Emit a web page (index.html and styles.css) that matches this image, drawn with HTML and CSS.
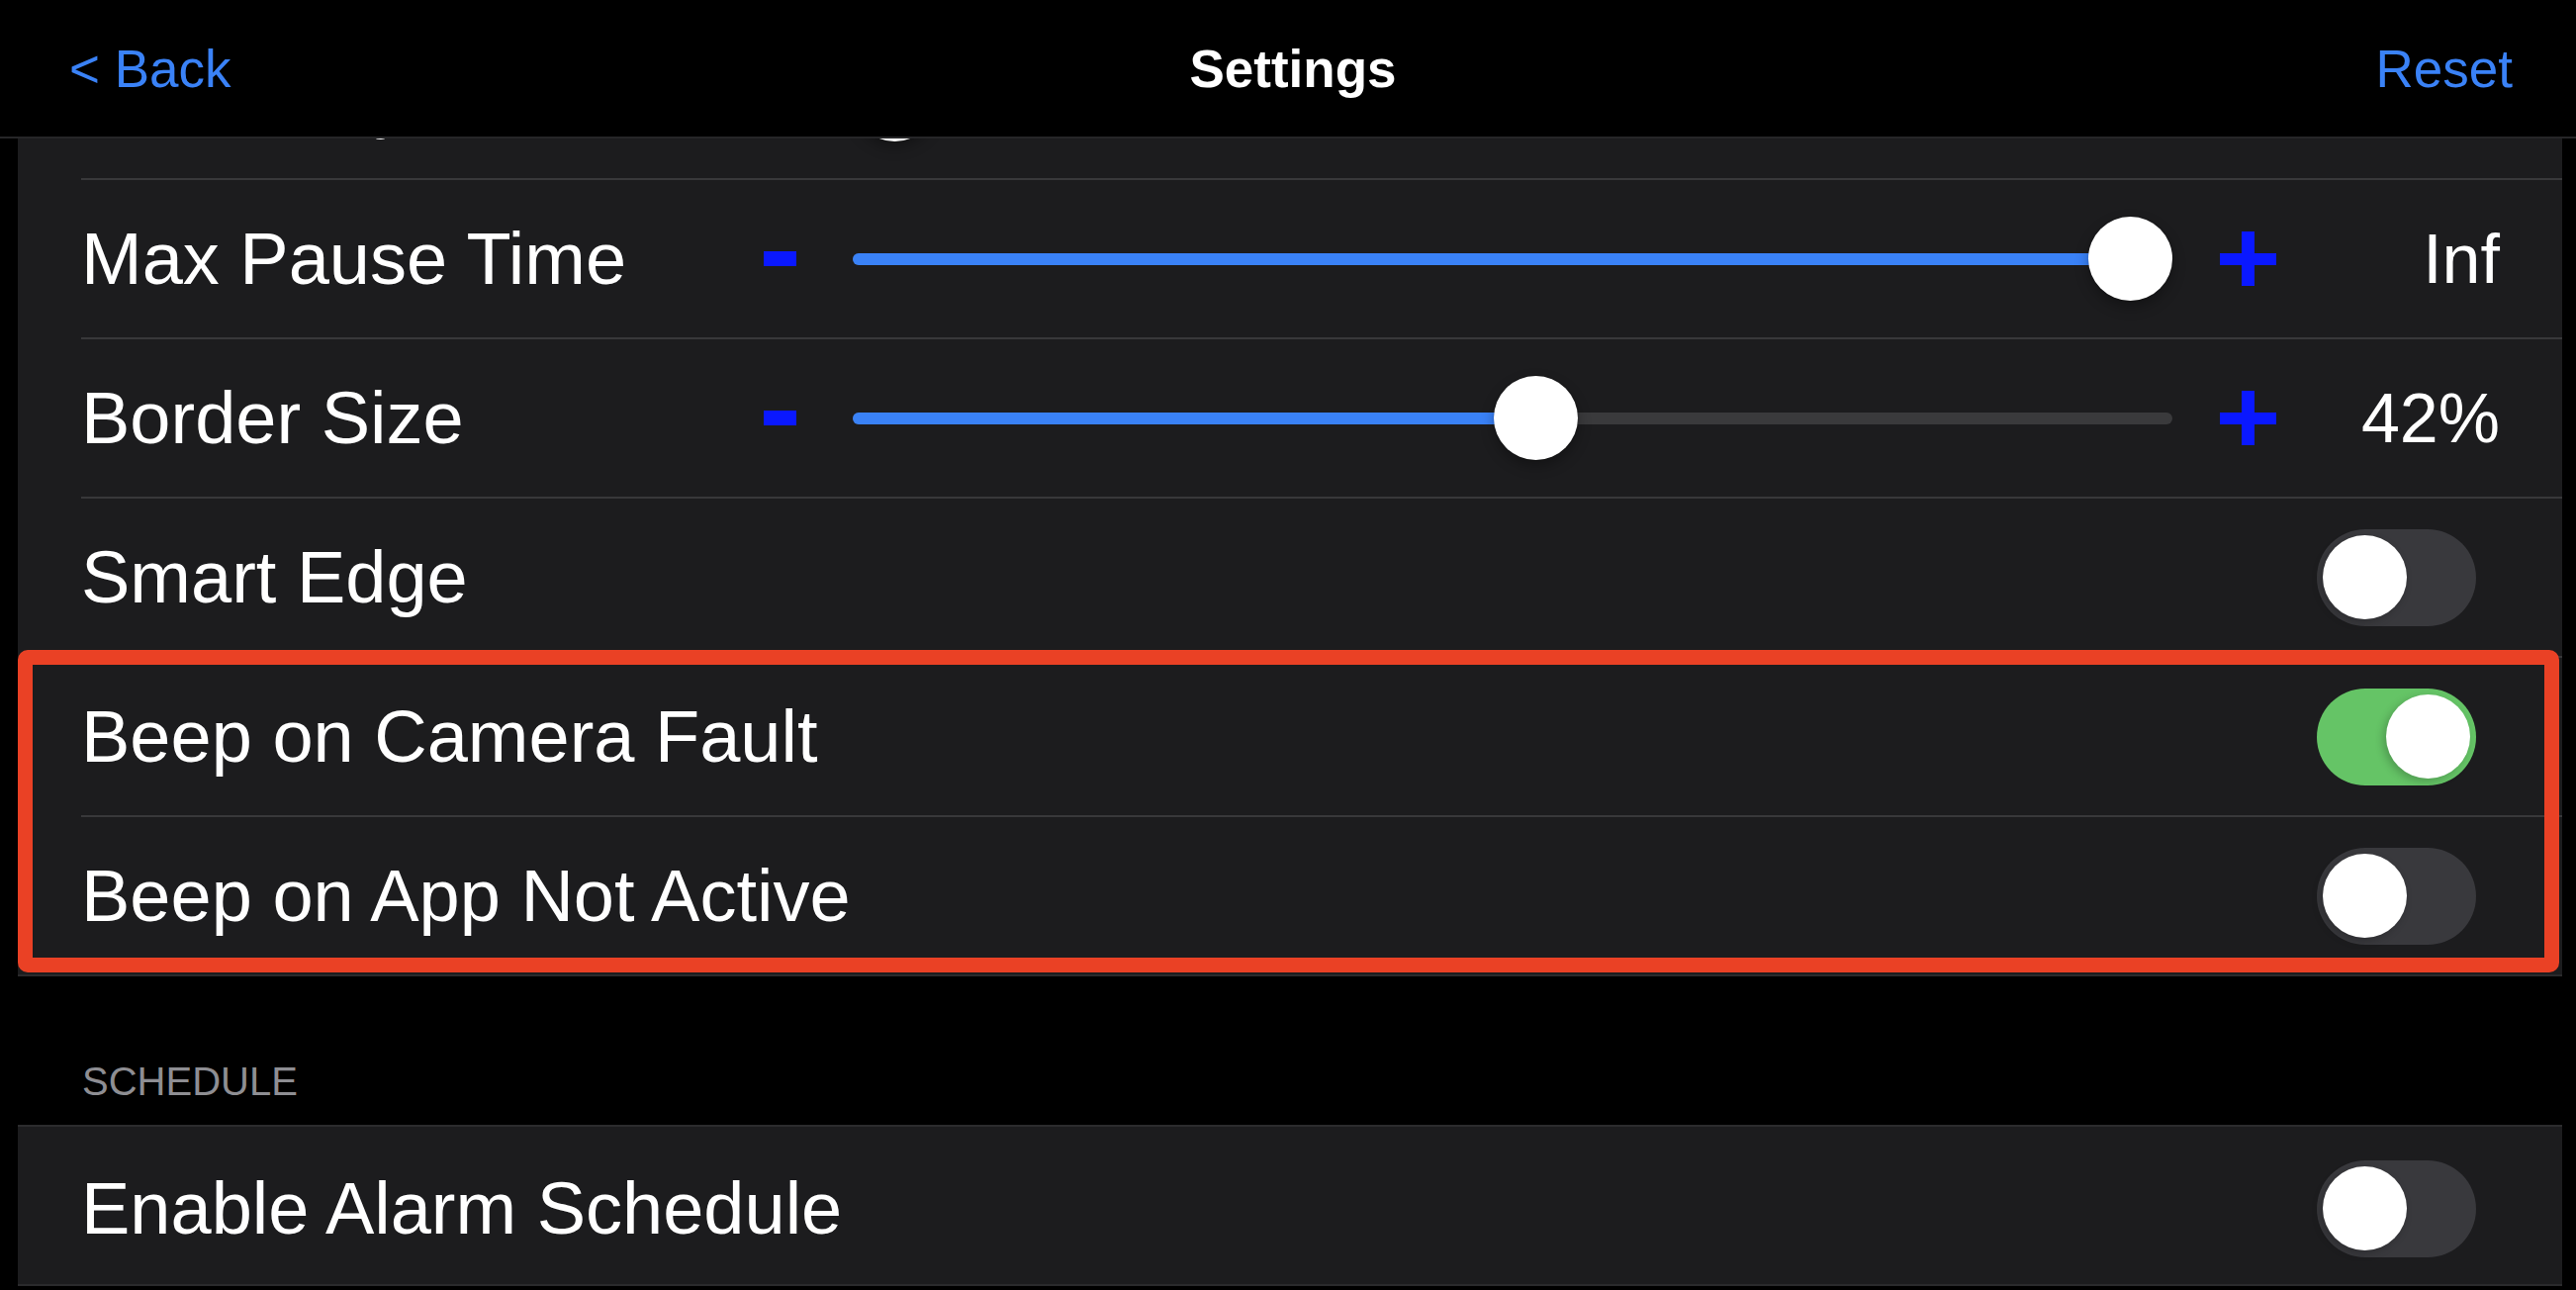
FILE: index.html
```html
<!DOCTYPE html>
<html lang="en">
<head>
    <meta charset="UTF-8">
    <meta name="viewport" content="width=device-width, initial-scale=1.0">
    <title>Settings</title>
    <link rel="stylesheet" href="styles.css">
</head>
<body>
    <header class="navbar">
        <a class="nav-link back">&lt; Back</a>
        <h1 class="nav-title">Settings</h1>
        <a class="nav-link reset">Reset</a>
    </header>

    <main class="content">
        <div class="panel">
            <div class="peek">
                <div class="row">
                    <div class="row-inner">
                        <span class="label">Sensitivity</span>
                        <span class="minus"></span>
                        <div class="track" style="--v: 0">
                            <div class="fill"></div>
                            <div class="knob"></div>
                        </div>
                        <svg class="plus" width="57" height="55" viewBox="0 0 57 55"><rect x="22" y="0" width="13" height="55"/><rect x="0" y="22" width="57" height="12"/></svg>
                        <span class="value"></span>
                    </div>
                </div>
            </div>

            <div class="row">
                <div class="row-inner">
                    <span class="label">Max Pause Time</span>
                    <span class="minus"></span>
                    <div class="track" style="--v: 1">
                        <div class="fill"></div>
                        <div class="knob"></div>
                    </div>
                    <svg class="plus" width="57" height="55" viewBox="0 0 57 55"><rect x="22" y="0" width="13" height="55"/><rect x="0" y="22" width="57" height="12"/></svg>
                    <span class="value">Inf</span>
                </div>
            </div>

            <div class="row">
                <div class="row-inner">
                    <span class="label">Border Size</span>
                    <span class="minus"></span>
                    <div class="track" style="--v: 0.519">
                        <div class="fill"></div>
                        <div class="knob"></div>
                    </div>
                    <svg class="plus" width="57" height="55" viewBox="0 0 57 55"><rect x="22" y="0" width="13" height="55"/><rect x="0" y="22" width="57" height="12"/></svg>
                    <span class="value">42%</span>
                </div>
            </div>

            <div class="row">
                <div class="row-inner">
                    <span class="label">Smart Edge</span>
                    <span class="toggle"><span class="toggle-knob"></span></span>
                </div>
            </div>

            <div class="group">
                <div class="row">
                    <div class="row-inner">
                        <span class="label">Beep on Camera Fault</span>
                        <span class="toggle on"><span class="toggle-knob"></span></span>
                    </div>
                </div>
                <div class="row last">
                    <div class="row-inner">
                        <span class="label">Beep on App Not Active</span>
                        <span class="toggle"><span class="toggle-knob"></span></span>
                    </div>
                </div>
                <div class="highlight"></div>
            </div>
        </div>

        <div class="section-title">SCHEDULE</div>

        <div class="panel schedule">
            <div class="row last">
                <div class="row-inner">
                    <span class="label">Enable Alarm Schedule</span>
                    <span class="toggle"><span class="toggle-knob"></span></span>
                </div>
            </div>
        </div>
    </main>
</body>
</html>
```

FILE: styles.css
```css
body {
    font-family: "Liberation Sans", Arial, sans-serif;
    margin: 0;
    padding: 0;
    background-color: #000;
    color: #fff;
    width: 2604px;
    height: 1304px;
    overflow: hidden;
}

.navbar {
    box-sizing: border-box;
    height: 140px;
    display: grid;
    grid-template-columns: 1fr auto 1fr;
    align-items: center;
    padding: 0 64px 0 70px;
    border-bottom: 2px solid #262628;
    font-size: 53px;
}

.nav-link {
    color: #3a82f7;
    text-decoration: none;
}

.reset {
    justify-self: end;
}

.nav-title {
    margin: 0;
    font-size: 53px;
    font-weight: bold;
    padding-left: 4px;
}

.content {
    padding: 0 14px 0 18px;
}

.panel {
    background-color: #1c1c1e;
    border-bottom: 2px solid #2a2a2c;
}

.peek {
    height: 42px;
    overflow: hidden;
}

.peek .row {
    margin-top: -119px;
}

.row {
    padding-left: 64px;
}

.row-inner {
    box-sizing: border-box;
    height: 161px;
    display: flex;
    align-items: center;
    padding-right: 63px;
    border-bottom: 2px solid #38383a;
}

.row.last .row-inner {
    height: 159px;
    border-bottom: none;
}

.label {
    flex: none;
    width: 690px;
    font-size: 74px;
    white-space: nowrap;
}

.minus {
    flex: none;
    width: 33px;
    height: 15px;
    margin-right: 57px;
    background-color: #0a18ff;
    filter: blur(0.6px);
}

.track {
    position: relative;
    flex: 1;
    height: 12px;
    border-radius: 6px;
    background-color: #3a3a3c;
}

.fill {
    height: 12px;
    border-radius: 6px;
    background-color: #3a82f7;
    width: calc(var(--v) * (100% - 85px) + 42px);
}

.knob {
    position: absolute;
    top: -37px;
    left: calc(var(--v) * (100% - 85px));
    width: 85px;
    height: 85px;
    border-radius: 50%;
    background-color: #fff;
    box-shadow: 0 6px 14px rgba(0, 0, 0, 0.3), 0 0 2px rgba(0, 0, 0, 0.2);
}

.plus {
    flex: none;
    margin-left: 48px;
    fill: #0a18ff;
    filter: blur(0.6px);
}

.value {
    flex: none;
    width: 226px;
    text-align: right;
    font-size: 70px;
}

.toggle {
    box-sizing: border-box;
    display: flex;
    align-items: center;
    justify-content: flex-start;
    width: 161px;
    height: 98px;
    padding: 0 6px;
    margin-left: auto;
    margin-right: 24px;
    border-radius: 49px;
    background-color: #39393d;
}

.toggle.on {
    justify-content: flex-end;
    background-color: #65c466;
}

.toggle-knob {
    width: 85px;
    height: 85px;
    border-radius: 50%;
    background-color: #fff;
    box-shadow: -3px 3px 8px rgba(0, 0, 0, 0.22);
}

.group {
    position: relative;
}

.highlight {
    position: absolute;
    top: -8px;
    left: 0;
    right: 3px;
    bottom: 2px;
    border: 15px solid #ea4125;
    border-radius: 10px;
    pointer-events: none;
}

.section-title {
    font-size: 40px;
    color: #8e8e93;
    padding: 84px 0 21px 65px;
}

.schedule {
    border-top: 2px solid #2c2c2e;
}

.schedule .row-inner {
    height: 152px;
    padding-top: 6px;
}
```
